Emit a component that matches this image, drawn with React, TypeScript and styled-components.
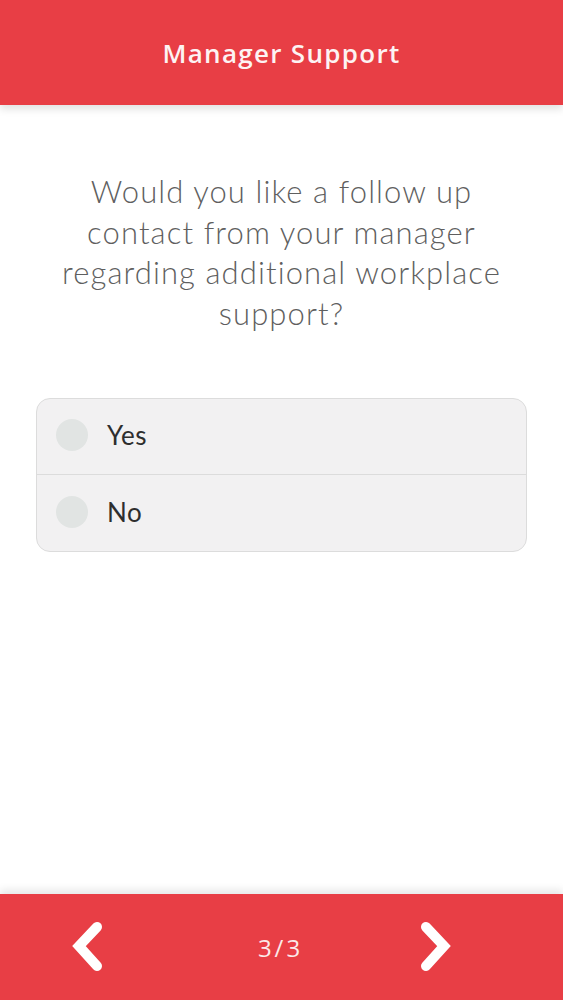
import React, { useState } from "react";
import styled, { createGlobalStyle } from "styled-components";

const GlobalStyle = createGlobalStyle`
  html, body {
    margin: 0;
    padding: 0;
    background: #ffffff;
  }
  body {
    font-family: Lato, "Open Sans", sans-serif;
  }
`;

const Screen = styled.div`
  width: 563px;
  height: 1000px;
  display: flex;
  flex-direction: column;
  background: #fff;
  overflow: hidden;
`;

const Header = styled.header`
  height: 105px;
  flex-shrink: 0;
  background: #e83e45;
  box-shadow: 0 4px 8px rgba(0, 0, 0, 0.12);
  display: flex;
  align-items: center;
  justify-content: center;
  position: relative;
  z-index: 1;
`;

const HeaderTitle = styled.h1`
  margin: 0;
  font-family: "Open Sans", sans-serif;
  font-weight: 600;
  font-size: 26px;
  letter-spacing: 1.3px;
  color: #fdf3f3;
`;

const Content = styled.main`
  flex: 1;
  padding: 66px 36px 0;
  display: flex;
  flex-direction: column;
`;

const Question = styled.p`
  margin: 0 auto 65px;
  max-width: 460px;
  font-family: Lato, sans-serif;
  font-weight: 300;
  font-size: 31px;
  line-height: 40.5px;
  color: #5f5f5f;
  text-align: center;
  letter-spacing: 1.1px;
`;

const OptionList = styled.div`
  border: 1px solid #dcdcdc;
  border-radius: 14px;
  background: #f2f1f2;
  overflow: hidden;
`;

const OptionRow = styled.label<{ $last?: boolean }>`
  height: 76px;
  display: flex;
  align-items: center;
  gap: 19px;
  padding-left: 19px;
  padding-bottom: 3px;
  box-sizing: border-box;
  border-bottom: ${(p) => (p.$last ? "none" : "1px solid #dcdcdc")};
  cursor: pointer;
`;

const Radio = styled.span<{ $checked?: boolean }>`
  width: 32px;
  height: 32px;
  border-radius: 50%;
  background: ${(p) => (p.$checked ? "#e83e45" : "#e1e4e3")};
  flex-shrink: 0;
`;

const OptionText = styled.span`
  font-family: Lato, sans-serif;
  font-size: 26px;
  color: #2e2e2e;
  letter-spacing: 0.6px;
`;

const Footer = styled.footer`
  height: 106px;
  flex-shrink: 0;
  background: #e83e45;
  box-shadow: 0 -4px 8px rgba(0, 0, 0, 0.1);
  display: flex;
  align-items: center;
  justify-content: space-between;
  padding: 0 110px 0 70px;
`;

const NavButton = styled.button`
  background: none;
  border: none;
  padding: 0;
  width: 36px;
  height: 52px;
  display: flex;
  align-items: center;
  justify-content: center;
  cursor: pointer;
`;

const PageCount = styled.span`
  font-family: "Open Sans", sans-serif;
  font-size: 24px;
  color: #fbe9e9;
  letter-spacing: 3px;
  margin-left: 38px;
`;

const Chevron = ({ dir }: { dir: "left" | "right" }) => (
  <svg width="34" height="50" viewBox="0 0 34 50">
    <path
      d={dir === "left" ? "M26 5 L8 24 L26 44" : "M8 5 L26 24 L8 44"}
      fill="none"
      stroke="#fff"
      strokeWidth="10"
      strokeLinecap="round"
      strokeLinejoin="miter"
    />
  </svg>
);

const options = ["Yes", "No"];

export default function App() {
  const [choice, setChoice] = useState<string | null>(null);
  return (
    <Screen>
      <GlobalStyle />
      <Header>
        <HeaderTitle>Manager Support</HeaderTitle>
      </Header>
      <Content>
        <Question>
          Would you like a follow up contact from your manager regarding
          additional workplace support?
        </Question>
        <OptionList>
          {options.map((o, i) => (
            <OptionRow
              key={o}
              $last={i === options.length - 1}
              onClick={() => setChoice(o)}
            >
              <Radio $checked={choice === o} />
              <OptionText>{o}</OptionText>
            </OptionRow>
          ))}
        </OptionList>
      </Content>
      <Footer>
        <NavButton aria-label="Previous">
          <Chevron dir="left" />
        </NavButton>
        <PageCount>3/3</PageCount>
        <NavButton aria-label="Next">
          <Chevron dir="right" />
        </NavButton>
      </Footer>
    </Screen>
  );
}
